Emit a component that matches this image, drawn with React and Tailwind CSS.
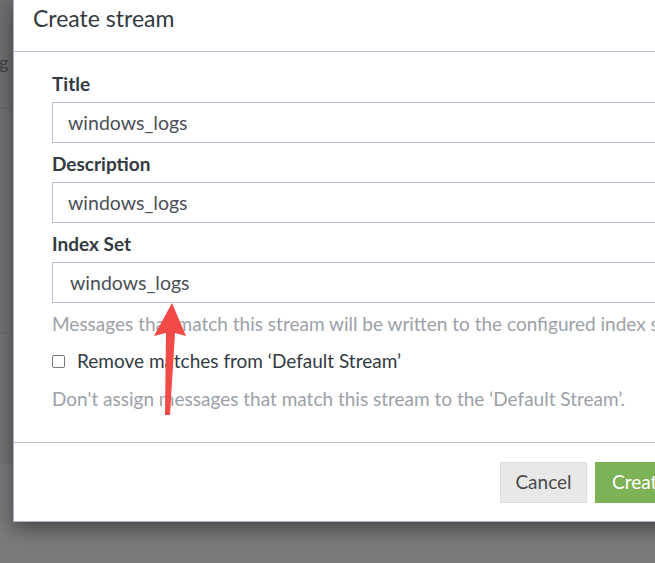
import React from "react";

const font = { fontFamily: "Lato, 'Liberation Sans', sans-serif" };

function Field({ label, value, select = false }) {
  return (
    <div className="flex flex-col">
      <label className="h-[24px] leading-[24px] mb-[6px] text-[19px] font-bold text-[#333a42]">
        {label}
      </label>
      <div
        className={`h-[41px] border border-[#b9c2d3] border-r-0 flex items-center text-[19.5px] text-[#4b5057] ${
          select ? "pl-[17px]" : "pl-[15px]"
        }`}
      >
        {value}
      </div>
    </div>
  );
}

export default function App() {
  return (
    <div
      className="relative w-[655px] h-[563px] overflow-hidden bg-[#7a7a7a]"
      style={font}
    >
      {/* page behind the overlay */}
      <div className="flex flex-col w-[13px]">
        <div className="h-[108px] bg-[#6f6f6f] flex items-center text-[18px] text-[#3f3f3f] whitespace-nowrap overflow-hidden pt-[16px]">
          <span className="-ml-[10px]">ag</span>
        </div>
        <div className="h-[225px] bg-[#717171] border-t border-[#676767]" />
        <div className="h-[130px] bg-[#737373] border-t border-[#6a6a6a]" />
        <div className="h-[100px] bg-[#7a7a7a] border-t border-[#707070]" />
      </div>

      {/* modal */}
      <div className="absolute left-[13px] top-0 w-[760px] h-[522px] bg-white border-l border-b border-[#a9b4c6] shadow-[0_6px_18px_rgba(0,0,0,0.45)] flex flex-col">
        <div className="h-[52px] border-b border-[#b8c0cf] flex items-start pl-[19px] pt-[3px]">
          <h4 className="text-[23px] leading-[30px] text-[#343a40]">Create stream</h4>
        </div>

        <div className="flex flex-col pl-[38px] pt-[20px] h-[390px]">
          <div className="flex flex-col gap-[9px]">
            <Field label="Title" value="windows_logs" />
            <Field label="Description" value="windows_logs" />
            <Field label="Index Set" value="windows_logs" select />
          </div>
          <p className="mt-[9px] text-[19px] leading-[24px] text-[#9ca1a8] whitespace-nowrap">
            Messages that match this stream will be written to the configured index set.
          </p>
          <div className="mt-[13px] flex items-center gap-[12px] text-[19px] leading-[24px] text-[#333a42] whitespace-nowrap">
            <span className="w-[13px] h-[13px] border border-[#767676] rounded-[2px] bg-white" />
            <span>Remove matches from ‘Default Stream’</span>
          </div>
          <p className="mt-[14px] text-[19px] leading-[24px] text-[#9ca1a8] whitespace-nowrap">
            Don't assign messages that match this stream to the ‘Default Stream’.
          </p>
        </div>

        <div className="flex-1 border-t border-[#b8c0cf] flex items-start pt-[19px] pl-[486px] gap-[8px]">
          <button className="h-[41px] w-[87px] bg-[#e8e8e8] border border-[#dcdcdc] text-[19px] text-[#4a4a4a]">
            Cancel
          </button>
          <button className="h-[41px] w-[150px] bg-[#7db356] text-[19px] text-white text-left pl-[17px] whitespace-nowrap">
            Create stream
          </button>
        </div>
      </div>

      {/* red annotation arrow */}
      <svg
        className="absolute left-0 top-0 pointer-events-none"
        width="655"
        height="563"
      >
        <polygon
          points="172,303 186,336 175,333 170,415 165,415 166,333 154,336"
          fill="#f24a46"
        />
      </svg>
    </div>
  );
}
